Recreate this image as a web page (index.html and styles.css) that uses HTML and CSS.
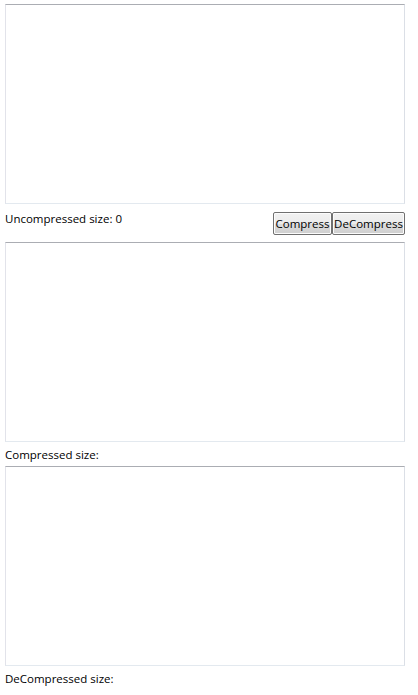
FILE: index.html
```html
<!DOCTYPE html>
<html>
<head>
<meta charset="utf-8">
<link rel="stylesheet" href="styles.css">
</head>
<body>
<div class="app">
  <div class="textbox"></div>
  <div class="row">
    <div class="label">Uncompressed size: 0</div>
    <div class="buttons">
      <button class="btn btn-compress">Compress</button><button class="btn btn-decompress">DeCompress</button>
    </div>
  </div>
  <div class="textbox"></div>
  <div class="label">Compressed size:</div>
  <div class="textbox"></div>
  <div class="label">DeCompressed size:</div>
</div>
</body>
</html>
```
FILE: styles.css
```css
html, body {
  margin: 0;
  padding: 0;
  background: #ffffff;
}
.app {
  padding: 4px 0 0 5px;
  width: 400px;
  display: flex;
  flex-direction: column;
  font-family: "Open Sans", "Noto Sans", sans-serif;
  font-size: 11.5px;
  color: #000;
}
.textbox {
  box-sizing: border-box;
  height: 200px;
  border: 1px solid;
  border-color: #abadb3 #dbdfe6 #e3e9ef #e2e3ea;
  background: #fff;
}
.row {
  display: flex;
  justify-content: space-between;
  align-items: flex-start;
  height: 38px;
}
.row .label {
  padding-top: 7px;
}
.label {
  line-height: 16px;
  height: 24px;
  padding-top: 5px;
  box-sizing: border-box;
  white-space: nowrap;
}
.buttons {
  display: flex;
  margin-top: 8px;
}
.btn {
  font-family: inherit;
  font-size: 11.5px;
  height: 23px;
  padding: 0;
  margin: 0;
  border: 1px solid #707070;
  border-radius: 2px;
  background: linear-gradient(#f2f2f2 0%, #ebebeb 50%, #dddddd 50%, #cfcfcf 100%);
  color: #000;
  box-shadow: inset 0 0 0 1px #fcfcfc;
  line-height: 19px;
  text-align: center;
}
.btn-compress {
  width: 59px;
}
.btn-decompress {
  width: 73px;
}
```
